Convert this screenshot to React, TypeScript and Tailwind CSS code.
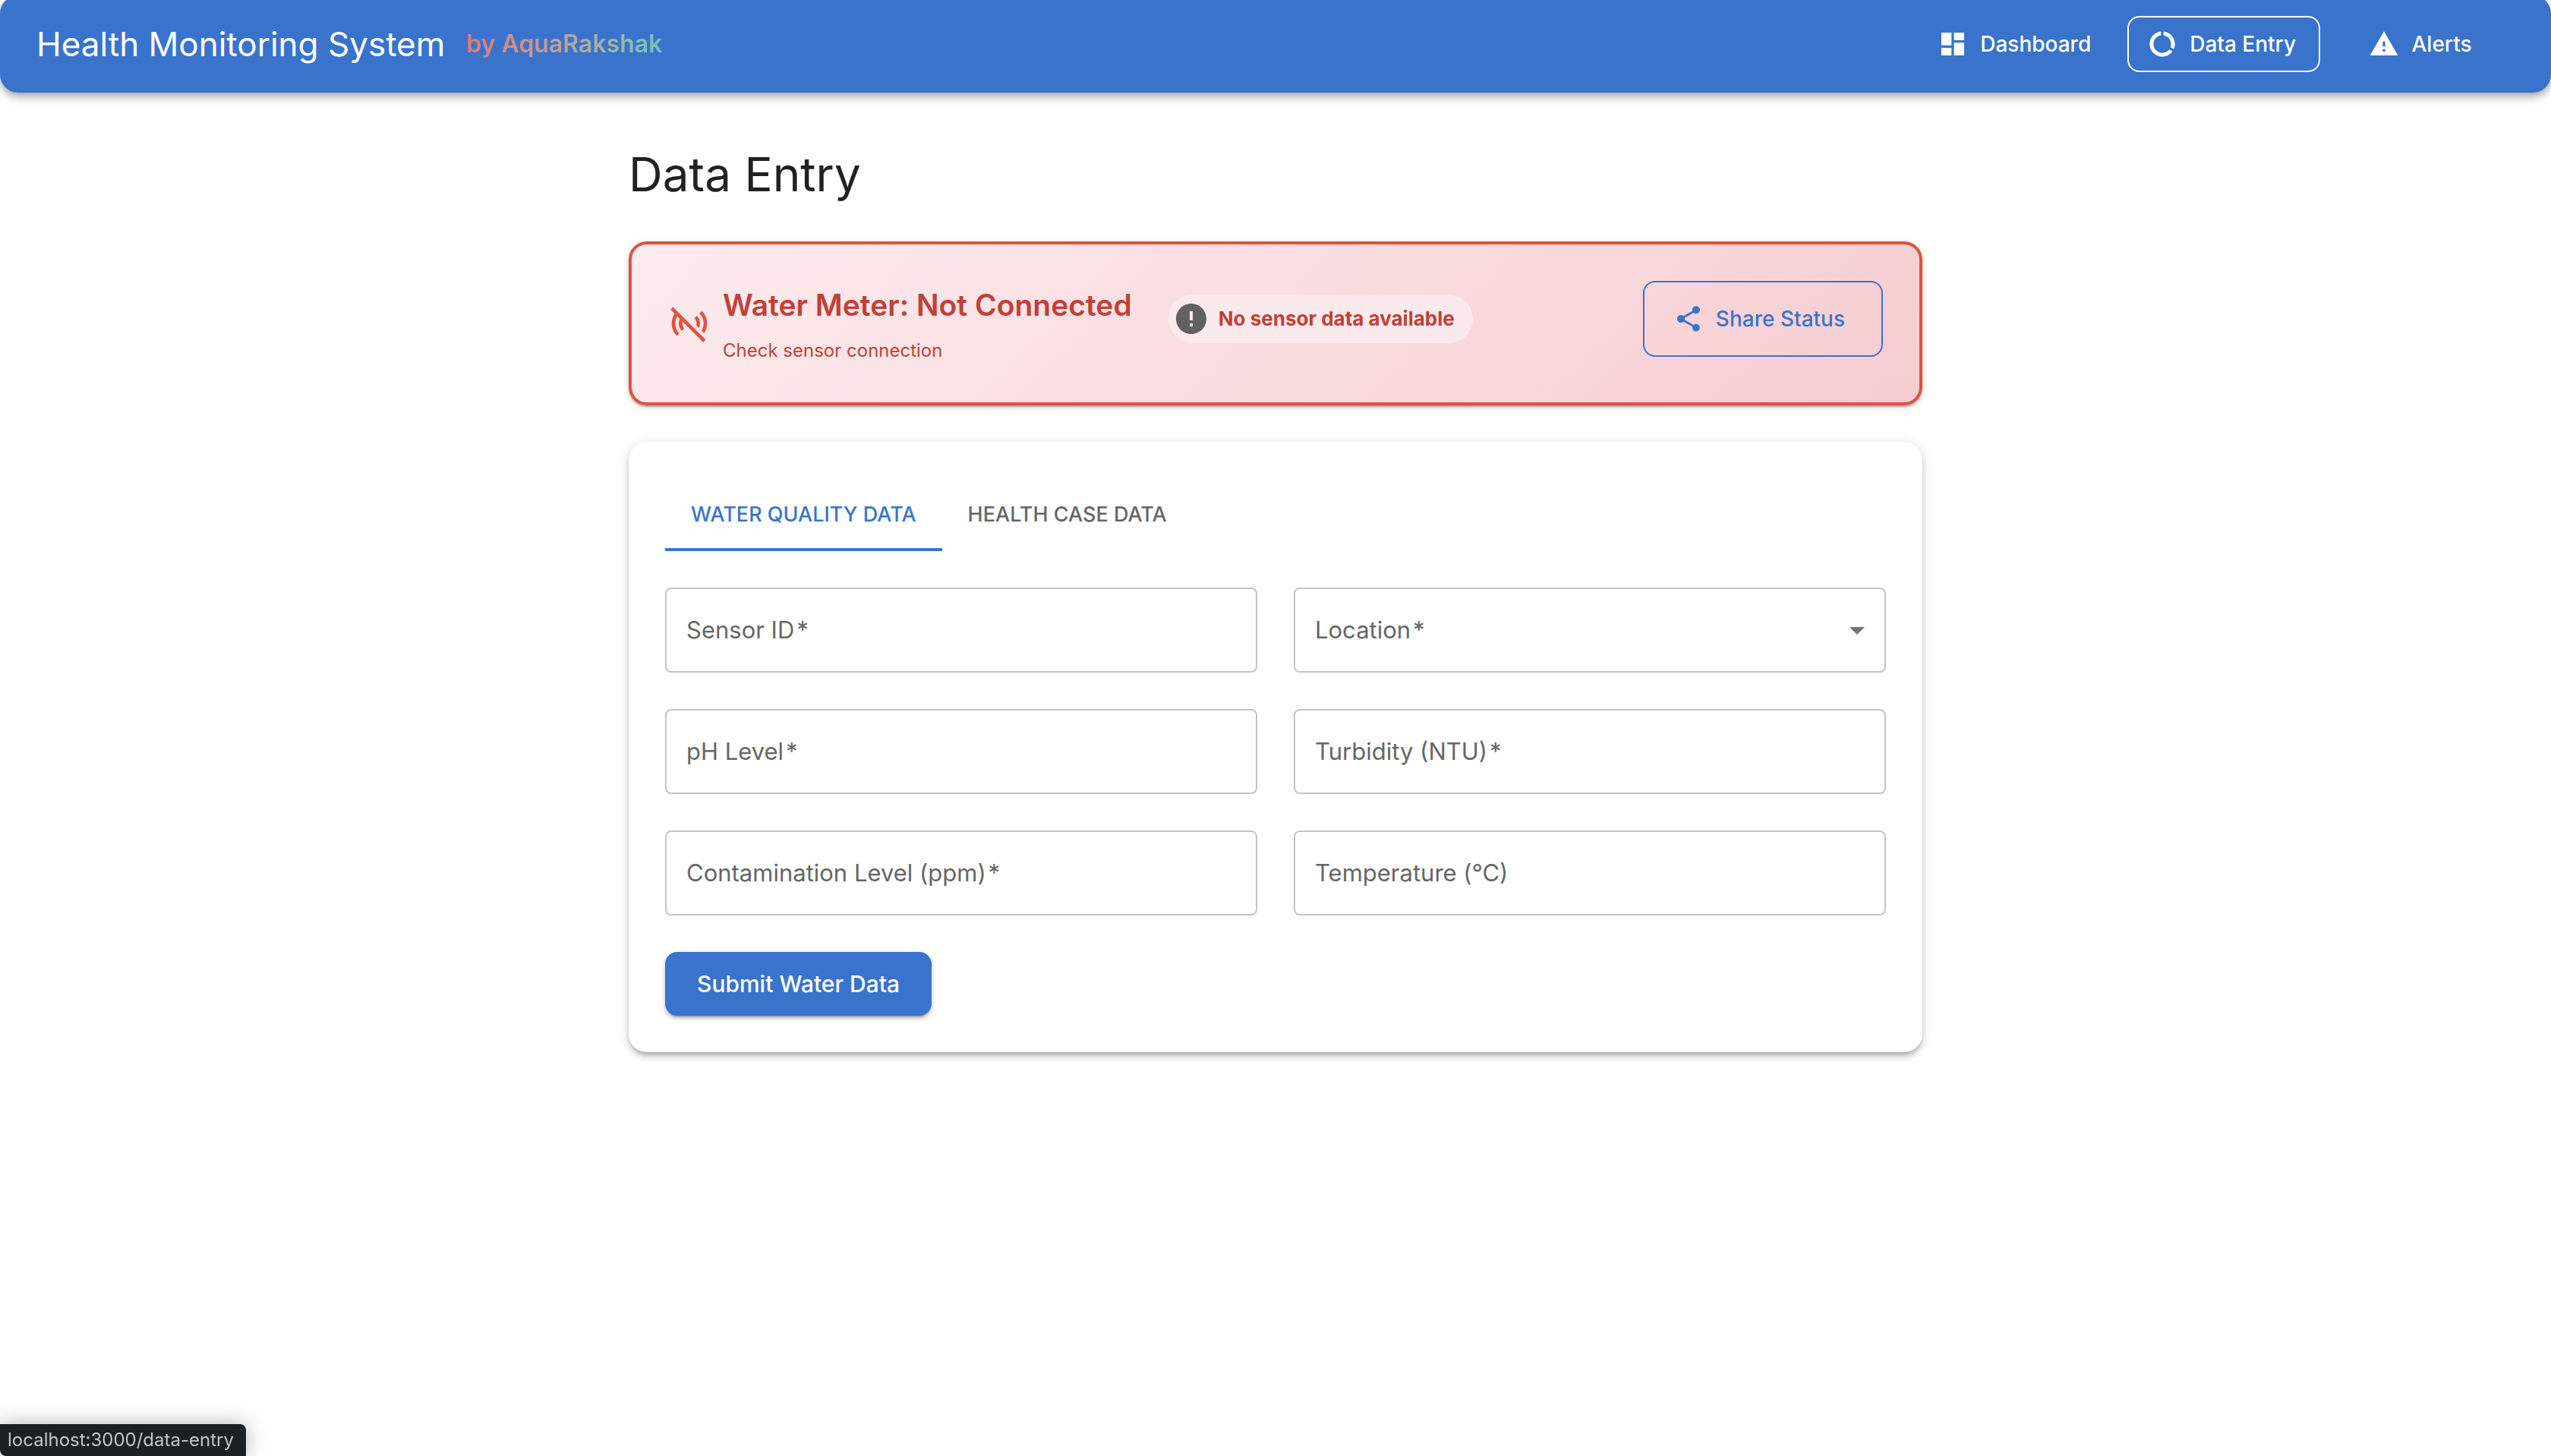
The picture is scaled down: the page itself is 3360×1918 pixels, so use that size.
import React from "react";
import {
  MdArrowDropDown,
  MdDashboard,
  MdDataUsage,
  MdError,
  MdSensorsOff,
  MdShare,
  MdWarning,
} from "react-icons/md";

type Field = { id: string; label: string; required?: boolean; kind?: "select" };

const fields: Field[] = [
  { id: "sensor", label: "Sensor ID", required: true },
  { id: "location", label: "Location", required: true, kind: "select" },
  { id: "ph", label: "pH Level", required: true },
  { id: "turbidity", label: "Turbidity (NTU)", required: true },
  { id: "contamination", label: "Contamination Level (ppm)", required: true },
  { id: "temperature", label: "Temperature (°C)" },
];

function FormField({ id, label, required, kind }: Field) {
  return (
    <div className="flex h-28 items-center rounded-lg border-2 border-[#c4c4c4] pr-3 pl-[26px]">
      <label htmlFor={id} className="shrink-0 text-[31px] leading-[46px] text-[#666666]">
        {label}
        {required && <span>{"\u200a*"}</span>}
      </label>
      {kind === "select" ? (
        <>
          <select id={id} className="h-full min-w-0 flex-1 appearance-none bg-transparent text-[31px] outline-none" />
          <MdArrowDropDown className="size-12 text-[#757575]" aria-hidden />
        </>
      ) : (
        <input id={id} className="h-full min-w-0 flex-1 bg-transparent pl-4 text-[31px] outline-none" />
      )}
    </div>
  );
}

export default function App() {
  return (
    <div className="min-h-screen bg-white font-[Inter,sans-serif] text-[#212121]">
      <header className="-mt-1.5 flex h-32 items-center justify-between rounded-3xl bg-[#3a73cc] px-12 text-white shadow-[0_4px_8px_-2px_rgba(0,0,0,0.2),0_8px_10px_0_rgba(0,0,0,0.14),0_2px_20px_0_rgba(0,0,0,0.12)]">
        <div className="flex items-center gap-7">
          <p className="text-[44px] leading-[64px]">Health Monitoring System</p>
          <p className="bg-linear-to-r from-[#e57875] to-[#6fc6bb] bg-clip-text text-[32px] leading-[48px] font-semibold text-transparent">
            by AquaRakshak
          </p>
        </div>
        <nav className="flex items-center gap-4 text-[28px] leading-[48px] font-medium">
          <a href="#dashboard" className="flex h-[74px] items-center gap-4 rounded-2xl border-2 border-transparent pr-[30px] pl-6">
            <MdDashboard className="size-10" aria-hidden />
            Dashboard
          </a>
          <a href="#data-entry" className="flex h-[74px] items-center gap-4 rounded-2xl border-2 border-white pr-[30px] pl-6">
            <MdDataUsage className="size-10" aria-hidden />
            Data Entry
          </a>
          <a
            href="#alerts"
            className="flex h-[74px] min-w-60 items-center justify-center gap-4 rounded-2xl border-2 border-transparent pr-2"
          >
            <MdWarning className="size-10" aria-hidden />
            Alerts
          </a>
        </nav>
      </header>

      <main className="mx-auto max-w-[1800px] px-12 pt-[66px]">
        <h1 className="text-[62px] leading-[84px]">Data Entry</h1>

        <section className="mt-[46px] flex items-start justify-between rounded-3xl border-4 border-[#e05241] bg-linear-135 from-[#fcebed] via-[#fadde0] to-[#f6cdd1] p-12 text-[#c23f38] shadow-[0_4px_2px_-2px_rgba(0,0,0,0.2),0_2px_4px_0_rgba(0,0,0,0.14),0_2px_8px_0_rgba(0,0,0,0.12)]">
          <div className="flex items-center gap-12">
            <div className="flex items-center gap-4">
              <MdSensorsOff className="size-14 text-[#e05241]" aria-hidden />
              <div className="flex flex-col gap-2">
                <h2 className="text-[39px] leading-[64px] font-semibold">Water Meter: Not Connected</h2>
                <p className="text-[24px] leading-[40px]">Check sensor connection</p>
              </div>
            </div>
            <div className="mb-3 flex h-16 items-center gap-3 rounded-full bg-[#fbeaeb] pr-6 pl-1.5">
              <MdError className="size-12 text-[#616161]" aria-hidden />
              <span className="text-[26px] leading-[40px] font-bold">No sensor data available</span>
            </div>
          </div>
          <button
            type="button"
            className="flex h-[100px] items-center gap-4 rounded-2xl border-2 border-[#3a73cc] pr-12 pl-[38px] text-[28px] leading-[48px] font-medium text-[#3a73cc]"
          >
            <MdShare className="size-10" aria-hidden />
            Share Status
          </button>
        </section>

        <section className="mt-12 rounded-3xl bg-white p-12 shadow-[0_6px_6px_-4px_rgba(0,0,0,0.2),0_6px_8px_0_rgba(0,0,0,0.14),0_2px_16px_0_rgba(0,0,0,0.12)]">
          <div role="tablist" className="flex text-[27px] leading-[36px] font-medium">
            <button role="tab" aria-selected="true" type="button" className="h-24 border-b-4 border-[#3a73cc] px-[34px] pt-1 text-[#3a73cc]">
              WATER QUALITY DATA
            </button>
            <button role="tab" aria-selected="false" type="button" className="h-24 px-[34px] text-[#666666]">
              HEALTH CASE DATA
            </button>
          </div>
          <form className="mt-12" onSubmit={(e) => e.preventDefault()}>
            <div className="grid grid-cols-2 gap-12">
              {fields.map((field) => (
                <FormField key={field.id} {...field} />
              ))}
            </div>
            <button
              type="submit"
              className="mt-12 h-[84px] rounded-2xl bg-[#3a73cc] px-[42px] text-[30px] leading-[52px] font-medium text-white shadow-[0_6px_2px_-4px_rgba(0,0,0,0.2),0_4px_4px_0_rgba(0,0,0,0.14),0_2px_10px_0_rgba(0,0,0,0.12)]"
            >
              Submit Water Data
            </button>
          </form>
        </section>
      </main>

      <div className="fixed bottom-0 left-0 flex h-[42px] items-center rounded-tr-lg rounded-bl-lg bg-[#1b2123] pr-4 pl-2.5 text-[24px] leading-[32px] text-[#c0c4c5] shadow-[0_0_28px_rgba(0,0,0,0.3)]">
        localhost:3000/data-entry
      </div>
    </div>
  );
}
